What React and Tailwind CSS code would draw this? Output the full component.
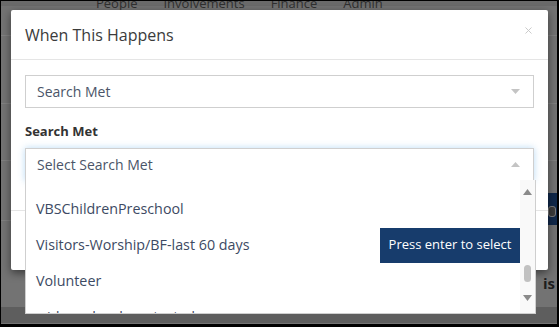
import { X } from 'lucide-react'

const items = ['VBSChildrenPreschool', 'Visitors-Worship/BF-last 60 days', 'Volunteer', 'widows_local_contacted']

function Caret({ up }) {
  return (
    <svg width="9" height="5" viewBox="0 0 9 5" className="shrink-0">
      <path d={up ? 'M0 5 L4.5 0 L9 5 Z' : 'M0 0 L4.5 5 L9 0 Z'} fill="#c4c4c4" />
    </svg>
  )
}

function App() {
  return (
    <div className="relative w-[559px] h-[327px] overflow-hidden border-t border-l border-r-2 border-b-[3px] border-black bg-[#737373] font-['Open_Sans',sans-serif]">
      {/* Background page behind the backdrop */}
      <div className="flex flex-col">
        <div className="h-[9px] bg-[#6a6a6a] flex gap-[26px] pl-[95px] text-[13px] leading-none text-[#2f2f2f] -mt-[4px]">
          <span>People</span>
          <span>Involvements</span>
          <span>Finance</span>
          <span>Admin</span>
        </div>
        <div className="h-[29px]" />
        <div className="h-px bg-[#808080]" />
        <div className="h-[67px]" />
        <div className="h-px bg-[#808080]" />
        <div className="h-[56px]" />
        <div className="h-px bg-[#808080]" />
        <div className="flex justify-end h-[59px]">
          <div className="w-[9px] h-[32px] mt-[32px] bg-[#10284a] pt-[13px] relative">
            <div className="w-[8px] h-[11px] rounded-[3px] border border-[#7a7a7a] bg-[#3a3a3a]" />
          </div>
        </div>
        <div className="h-px bg-[#808080]" />
        <div className="flex justify-end h-[86px] pt-[55px] pr-[2px]">
          <span className="text-[15px] font-bold text-[#1e1e1e] leading-none">is</span>
        </div>
        <div className="h-[16px] bg-[#5e5e5e]" />
      </div>

      {/* Modal */}
      <div className="absolute left-[10px] top-[9px] w-[537px] h-[260px] bg-white rounded-[2px] shadow-[0_3px_9px_rgba(0,0,0,0.5)] flex flex-col">
        <div className="h-[50px] flex items-center justify-between pl-[14px] pr-[14px] border-b border-[#e5e5e5]">
          <span className="text-[16px] text-[#3b3b3b]">When This Happens</span>
          <X size={11} strokeWidth={2} color="#c6c6c6" className="-mt-[8px]" />
        </div>
        <div className="px-[14px] pt-[15px] flex flex-col">
          <div className="h-[33px] border border-[#cfcfcf] flex items-center justify-between pl-[11px] pr-[13px]">
            <span className="text-[14px] text-[#4a5568]">Search Met</span>
            <Caret />
          </div>
          <div className="mt-[14px] text-[13px] font-bold text-[#333]">Search Met</div>
          <div className="mt-[6px] h-[33px] border border-[#cfcfcf] flex items-center justify-between pl-[11px] pr-[13px] shadow-[0_0_7px_rgba(102,175,233,0.45)]">
            <span className="text-[14px] text-[#4a5568]">Select Search Met</span>
            <Caret up />
          </div>
        </div>
        <div className="mt-[29px] border-t border-[#e5e5e5]" />
      </div>

      {/* Dropdown list, overflows the modal */}
      <div className="absolute left-[24px] top-[179px] w-[511px] h-[134px] bg-white border border-t-0 border-[#cfcfcf] overflow-hidden flex">
        <div className="flex-1 flex flex-col pt-[11px]">
          {items.map((t, i) => (
            <div key={t} className="h-[36px] shrink-0 flex items-center justify-between pl-[10px]">
              <span className="text-[14.3px] text-[#3d4a63]">{t}</span>
              {i === 1 && (
                <span className="h-[35px] w-[140px] bg-[#173c6c] text-white text-[13px] flex items-center justify-center">
                  Press enter to select
                </span>
              )}
            </div>
          ))}
        </div>
        <div className="w-[15px] bg-[#f9f9f9] flex flex-col items-center pt-[9px] pb-[12px]">
          <svg width="9" height="6" viewBox="0 0 9 6"><path d="M0 6 L4.5 0 L9 6 Z" fill="#8a8a8a" /></svg>
          <div className="flex-1" />
          <div className="w-[7px] h-[17px] rounded-[4px] bg-[#c1c1c1] mb-[13px]" />
          <svg width="9" height="6" viewBox="0 0 9 6"><path d="M0 0 L4.5 6 L9 0 Z" fill="#8a8a8a" /></svg>
        </div>
      </div>
    </div>
  )
}

export default App
